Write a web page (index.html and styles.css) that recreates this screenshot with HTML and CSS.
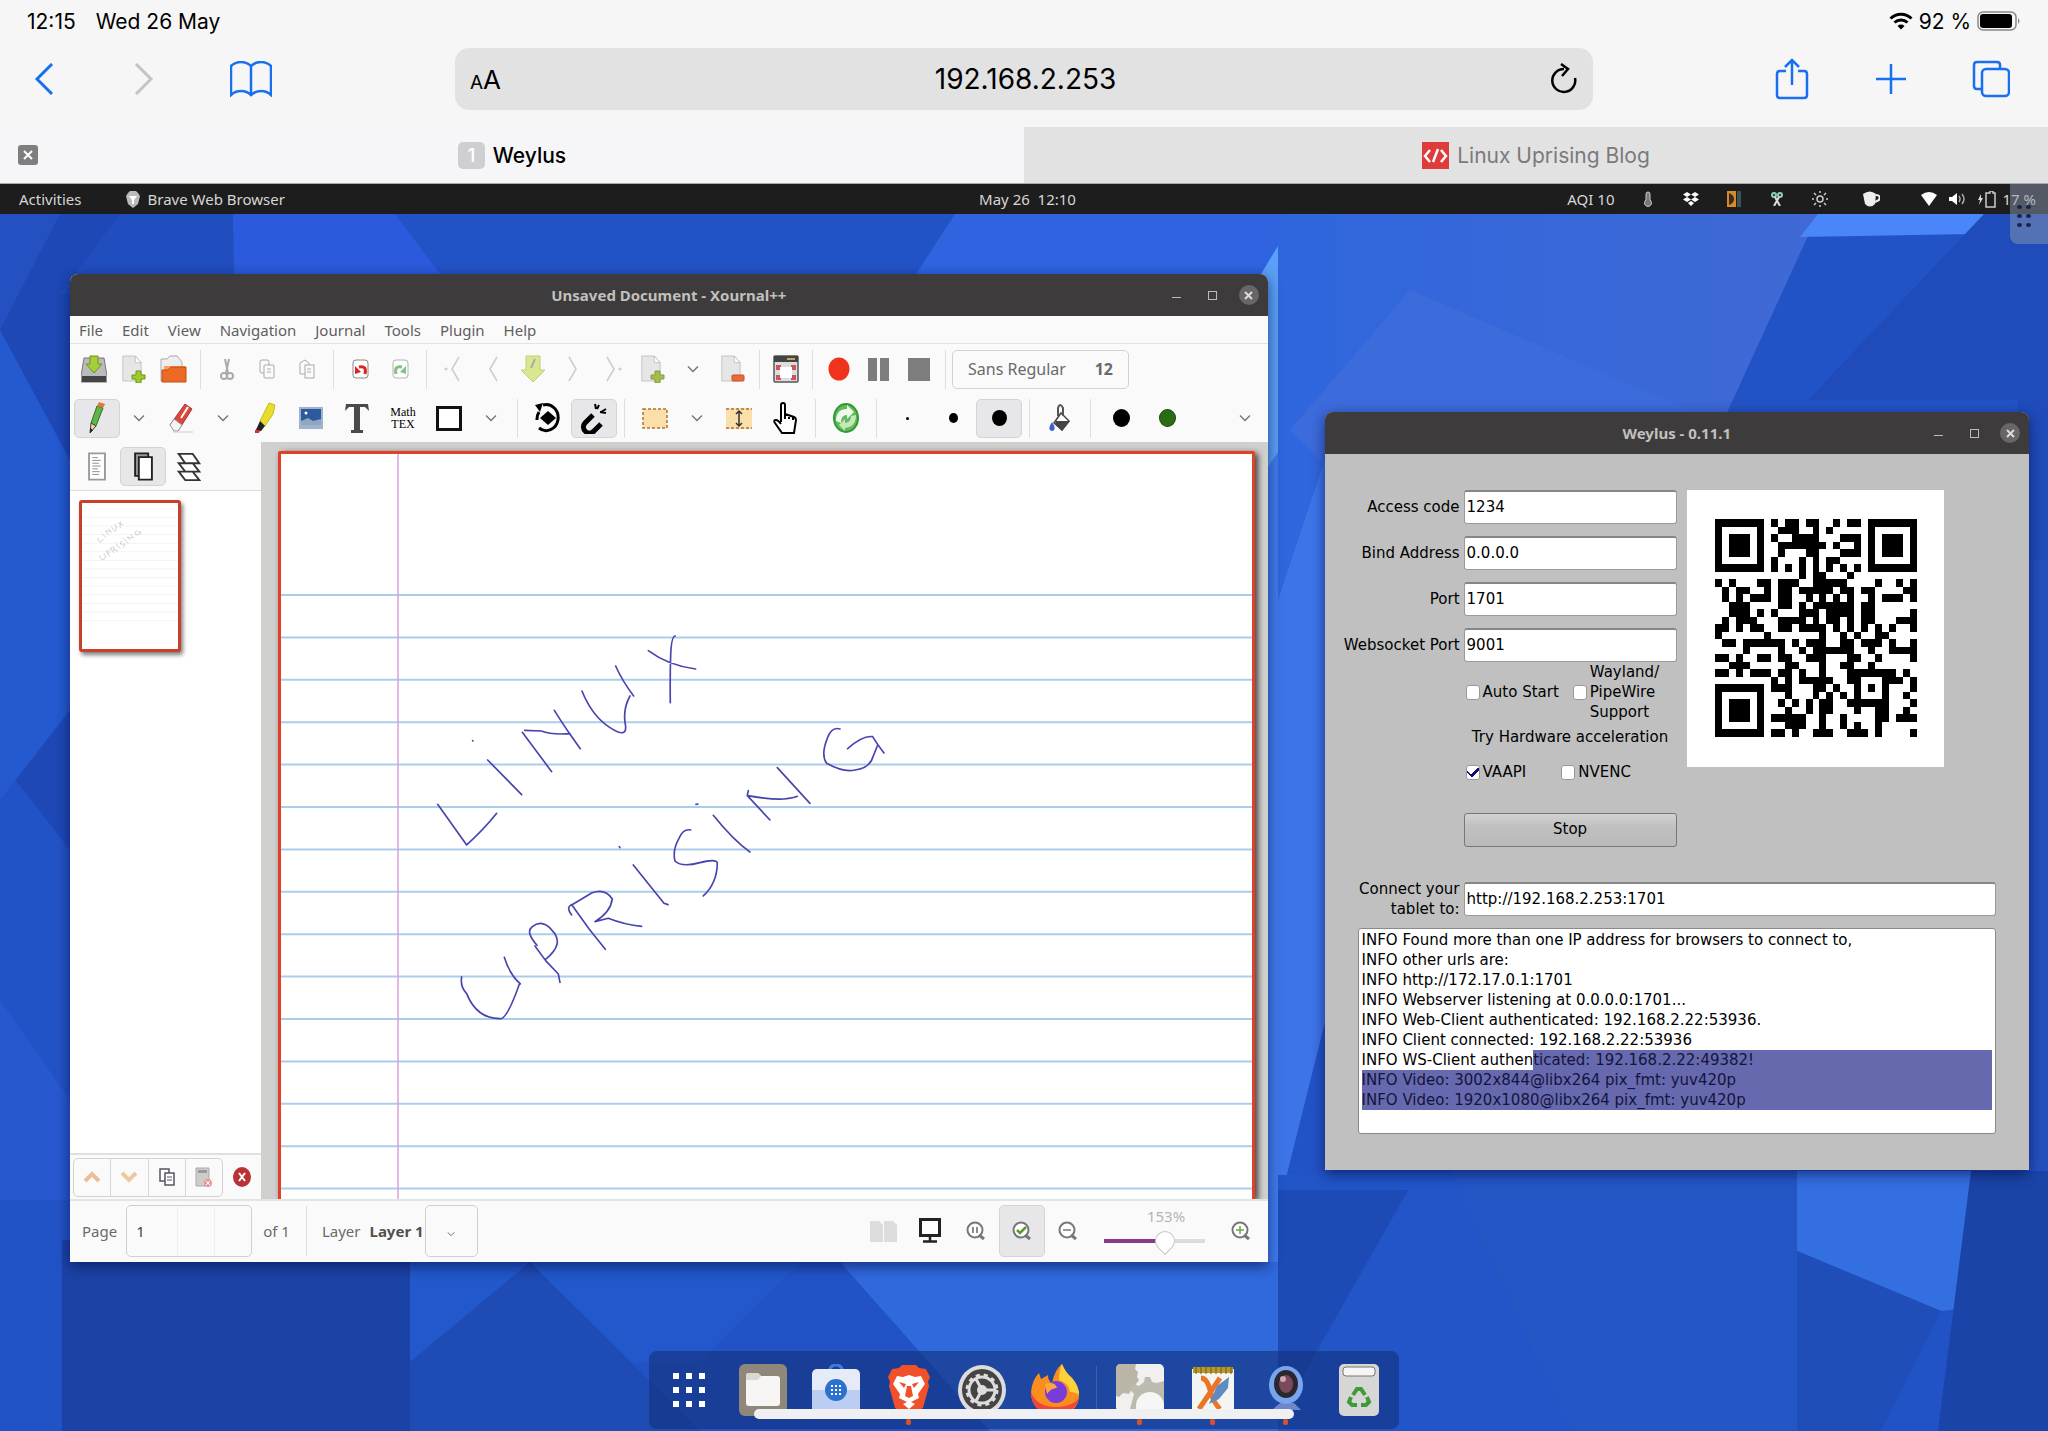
FILE: index.html
```html
<!DOCTYPE html>
<html lang="en">
<head>
    <meta charset="UTF-8">
    <meta name="viewport" content="width=device-width, initial-scale=1.0">
    <title>Weylus</title>
    <link rel="stylesheet" href="styles.css">
</head>
<body>
    <!-- Shared icons -->
    <svg class="sprite" aria-hidden="true">
        <symbol id="chevron" viewBox="0 0 12 12"><path d="M1 3.500l5 5 5-5" fill="none" stroke="#777" stroke-width="1.500"/></symbol>
        <symbol id="page" viewBox="0 0 24 32"><path d="M1 1h15l7 8v22H1z" fill="#e6e6e6" stroke="#bdbdbd"/><path d="M16 1v8h7z" fill="#fff" stroke="#bdbdbd"/></symbol>
        <symbol id="lens" viewBox="0 0 20 20"><circle cx="9" cy="9" r="7.500" fill="#fff" stroke="#777" stroke-width="2"/><path d="M13 14l5 4" stroke="#777" stroke-width="3"/></symbol>
    </svg>

    <header class="safari">
        <div class="status-bar">
            <span>12:15</span>
            <span>Wed 26 May</span>
            <span class="status-right">
                <svg width="24" height="18" viewBox="0 0 24 18" fill="none" stroke="#000" stroke-width="3"><path d="M1.500 6.500a15 15 0 0 1 21 0M5.500 10.500a9.500 9.500 0 0 1 13 0"/><path d="M12 17.500l-3.500-3.500a5 5 0 0 1 7 0z" fill="#000" stroke="none"/></svg>
                92 %
                <svg width="44" height="20" viewBox="0 0 44 20"><rect x="1" y="1" width="38" height="18" rx="5" fill="none" stroke="#888" stroke-width="1.500"/><rect x="3" y="3" width="32" height="14" rx="3"/><path d="M41 7q3 3 0 6z" fill="#888"/></svg>
            </span>
        </div>
        <nav class="toolbar">
            <button class="tool" aria-label="Back"><svg width="20" height="32" viewBox="0 0 20 32"><path d="M18 1L3 16l15 15" stroke="#1a6ff0" stroke-width="3"/></svg></button>
            <button class="tool" aria-label="Forward"><svg width="20" height="32" viewBox="0 0 20 32"><path d="M2 1l15 15L2 31" stroke="#c4c4c6" stroke-width="3"/></svg></button>
            <button class="tool tool-book" aria-label="Bookmarks"><svg width="42" height="36" viewBox="0 0 42 36"><path d="M21 5Q17 1 11 1T1 5v29q4-4 10-4t10 4q4-4 10-4t10 4V5q-4-4-10-4T21 5zv29" stroke="#1a6ff0" stroke-width="2.500"/></svg></button>
            <div class="address">
                <button class="reader" aria-label="Page settings"><small>A</small>A</button>
                <input type="text" value="192.168.2.253" aria-label="Address">
                <button class="reload" aria-label="Reload"><svg width="28" height="32" viewBox="0 0 28 32"><path d="M14 6a11.500 11.500 0 1 0 11 9M11 1l7 5-6 7" stroke="#000" stroke-width="2.500"/></svg></button>
            </div>
            <div class="actions">
                <button class="tool" aria-label="Share"><svg width="34" height="42" viewBox="0 0 34 42"><path d="M11 13H5q-3 0-3 3v21q0 3 3 3h24q3 0 3-3V16q0-3-3-3h-6M17 27V2M10 9l7-7 7 7" stroke="#1a6ff0" stroke-width="2.500"/></svg></button>
                <button class="tool" aria-label="New tab"><svg width="30" height="30" viewBox="0 0 30 30"><path d="M15 0v30M0 15h30" stroke="#1a6ff0" stroke-width="2.500"/></svg></button>
                <button class="tool" aria-label="Tabs"><svg width="38" height="38" viewBox="0 0 38 38"><rect x="10" y="9" width="27" height="27" rx="4" stroke="#1a6ff0" stroke-width="2.500"/><path d="M10 29H5q-3 0-3-3V5q0-3 3-3h20q3 0 3 3v4" stroke="#1a6ff0" stroke-width="2.500"/></svg></button>
            </div>
        </nav>
        <div class="tabs">
            <div class="tab tab-active">
                <button class="tab-close" aria-label="Close tab"><svg width="10" height="10" viewBox="0 0 10 10"><path d="M1 1l8 8M9 1L1 9" stroke="#fff" stroke-width="2"/></svg></button>
                <span class="tab-badge">1</span>
                <a href="#">Weylus</a>
            </div>
            <div class="tab">
                <svg width="27" height="27" viewBox="0 0 27 27"><path d="M0 0h27v27H0z" fill="#e03b3b"/><path d="M8 8l-5 6 5 6M19 8l5 6-5 6M16 7l-5 13" fill="none" stroke="#fff" stroke-width="2.500"/></svg>
                <a href="#">Linux Uprising Blog</a>
            </div>
        </div>
    </header>

    <div class="gnome-bar">
        <div class="gnome-left">
            <span>Activities</span>
            <span class="gnome-app">
                <svg width="14" height="17" viewBox="0 0 14 17"><path d="M2 2l2-2h6l2 2 2 3-2 8-5 4-5-4-2-8z" fill="#bbb"/><path d="M3 5h8l-3 4v4H6V9z" fill="#fff"/></svg>
                Brave Web Browser
            </span>
        </div>
        <span class="gnome-clock">May 26&nbsp; 12:10</span>
        <div class="gnome-right">
            <span class="aqi">AQI 10</span>
            <span class="tray"><svg width="10" height="16" viewBox="0 0 10 16"><path d="M3 9V3a2 2 0 0 1 4 0v6a3.500 3.500 0 1 1-4 0z" fill="#777" stroke="#ccc"/></svg></span>
            <span class="tray"><svg width="16" height="14" viewBox="0 0 16 14"><path d="M4 0l4 2.500L4 5 0 2.500zM12 0l4 2.500L12 5 8 2.500zM4 5l4 2.500L4 10 0 7.500zM12 5l4 2.500-4 2.500-4-2.500zM8 9l3 2-3 3-3-3z" fill="#fff"/></svg></span>
            <span class="tray"><svg width="14" height="16" viewBox="0 0 14 16"><path d="M0 0h9v16H0z" fill="#d88a2a"/><path d="M2 2q5 2 5 6t-5 6z" fill="#3a2a1c"/><path d="M10 0h4v16h-4z" fill="#3c5458"/></svg></span>
            <span class="tray"><svg width="14" height="14" viewBox="0 0 14 14" fill="none" stroke="#8fd0b4" stroke-width="2"><circle cx="4" cy="3" r="2"/><circle cx="10" cy="3" r="2"/><path d="M5 5l5 9M9 5L4 14" stroke="#ddd"/></svg></span>
            <span class="tray"><svg width="16" height="16" viewBox="0 0 16 16" fill="none" stroke="#ccc" stroke-width="1.500"><circle cx="8" cy="8" r="3"/><path d="M8 0v2M8 14v2M0 8h2M14 8h2M2 2l2 2M12 12l2 2M2 14l2-2M12 4l2-2"/></svg></span>
            <span class="tray tray-cup"><svg width="18" height="16" viewBox="0 0 18 16"><path d="M1 3q7-5 13 0l-1 10q-5 5-10 0z" fill="#eee"/><path d="M14 4q5 0 3 5l-4 2" fill="none" stroke="#eee" stroke-width="2"/></svg></span>
            <svg width="16" height="14" viewBox="0 0 16 14"><path d="M0 3q8-6 16 0L8 14z" fill="#fff"/></svg>
            <svg width="17" height="14" viewBox="0 0 17 14"><path d="M0 5h3l5-4v12L3 9H0z" fill="#fff"/><path d="M10 4q2 3 0 6M13 2q4 5 0 10" fill="none" stroke="#aaa" stroke-width="1.500"/></svg>
            <svg width="18" height="17" viewBox="0 0 18 17"><path d="M3 3L0 9h2l-1 5 4-7H3z" fill="#ddd"/><path d="M10 2h2V0h3v2h2v14H8V2z" fill="none" stroke="#ccc" stroke-width="1.500"/></svg>
            <span class="charge">17 %</span>
        </div>
    </div>

    <main class="desktop">
        <svg class="wallpaper" viewBox="0 214 2048 1217" preserveAspectRatio="none" aria-hidden="true">
            <defs>
                <linearGradient id="glow" x1="0" y1="0" x2="1" y2="0"><stop offset="0" stop-color="#2f66de"/><stop offset="1" stop-color="#4069d4"/></linearGradient>
            </defs>
            <path fill="#2253c6" d="M0 214h2048v1217H0z"/>
            <path fill="#1e48b6" d="M0 214h120L70 500v350L0 760z"/>
            <path fill="#2450c2" d="M0 214h60L0 330z"/>
            <path fill="#2b5bdc" d="M233 214h162l60 80-220 0z"/>
            <path fill="#214ebe" d="M120 214h113v80H60z"/>
            <path fill="#2f63e0" d="M955 214h346l-60 100H890z"/>
            <path fill="#3f7cec" d="M1278 246l-40 66v950h40z"/>
            <path fill="#5aa0f6" d="M1278 246l-40 66v200l40-60z"/>
            <path fill="url(#glow)" d="M1278 214h540l-110 240-430 300z"/>
            <path fill="#3c6bdc" d="M1290 430l120-140 280 120-60 60h-300z"/>
            <path fill="#4a85fa" d="M1818 214h166l-12 20-172 3z"/>
            <path fill="#1f4cba" d="M1984 214h64v1217h-90l60-500V400h-210z"/>
            <path fill="#3d74e8" d="M1278 600l50-150v560l-50 200z"/>
            <path fill="#2450bf" d="M2029 560h19v700l-19 60z"/>
            <path fill="#2459d0" d="M0 330l70 130v250L0 800z"/>
            <path fill="#2758d0" d="M0 1000l70 100v100H0z"/>
            <path fill="#1b42a6" d="M62 1240h350v191H62z"/>
            <path fill="#2258cb" d="M410 1262h390l-100 100H410z"/>
            <path fill="#1e4bb4" d="M410 1362l120-100 170 169H410z"/>
            <path fill="#2f69dc" d="M840 1262h438v169H990z"/>
            <path fill="#2155c8" d="M1278 1175h260l120 256h-380z"/>
            <path fill="#1e4ab6" d="M1278 1190h130l-130 230z"/>
            <path fill="#2556c6" d="M1450 1171h350v260h-230z"/>
            <path fill="#346fe2" d="M1797 1171h174l60 130-90 10-144-60z"/>
            <path fill="#1f4eb8" d="M1797 1251l144 60-60 120h-84z"/>
            <path fill="#1b44a8" d="M1971 1171h77v260h-110z"/>
        </svg>

        <section class="window xournal">
            <div class="titlebar">
                <h1>Unsaved Document - Xournal++</h1>
                <div class="window-buttons">
                    <button aria-label="Minimize"><i class="min"></i></button>
                    <button aria-label="Maximize"><i class="max"></i></button>
                    <button class="close" aria-label="Close"><svg width="9" height="9" viewBox="0 0 9 9"><path d="M1 1l7 7M8 1L1 8" stroke="#ddd" stroke-width="2"/></svg></button>
                </div>
            </div>
            <nav class="menubar">
                <a href="#">File</a>
                <a href="#">Edit</a>
                <a href="#">View</a>
                <a href="#">Navigation</a>
                <a href="#">Journal</a>
                <a href="#">Tools</a>
                <a href="#">Plugin</a>
                <a href="#">Help</a>
            </nav>

            <div class="row row-file">
                <button aria-label="Save"><svg width="26" height="28" viewBox="0 0 26 28"><path d="M3 3h20l3 18v6H0v-6z" fill="#bbb" stroke="#777"/><path d="M1 21h24v6H1z" fill="#444"/><path d="M9 1h8v8h4l-8 9-8-9h4z" fill="#a5cf3a" stroke="#6e9414"/></svg></button>
                <button aria-label="New"><svg width="26" height="28" viewBox="0 0 26 28"><use href="#page" x="1" width="20" height="27"/><path d="M15 16h5v4h4v4h-4v4h-5v-4h-4v-4h4z" fill="#9ccc2e" stroke="#6e9414"/></svg></button>
                <button aria-label="Open"><svg width="28" height="28" viewBox="0 0 28 28"><path d="M1 4h6l3-3h7l5 6v19H1z" fill="#eee" stroke="#aaa"/><path d="M4 11h21v6H4z" fill="#f7a05a"/><path d="M2 15h6l3-3h15v15H2z" fill="#ea6a26" stroke="#c24d12"/></svg></button>
                <i class="sep"></i>
                <button aria-label="Cut"><svg width="14" height="22" viewBox="0 0 14 22" fill="none" stroke="#aaa" stroke-width="2"><path d="M5 1l3 14M9 1L6 15"/><circle cx="4" cy="18" r="3"/><circle cx="10" cy="18" r="3"/></svg></button>
                <button aria-label="Copy"><svg width="16" height="20" viewBox="0 0 16 20" fill="#fafafa" stroke="#aaa"><rect x="1" y="1" width="9" height="13" rx="2"/><rect x="5" y="6" width="10" height="13" rx="1"/><path d="M8 10h4M8 13h4"/></svg></button>
                <button aria-label="Paste"><svg width="16" height="20" viewBox="0 0 16 20" fill="#fafafa" stroke="#aaa"><path d="M1 4l5-3 4 3v11H1z"/><rect x="6" y="6" width="9" height="13"/><path d="M8 10h4M8 13h4"/></svg></button>
                <i class="sep"></i>
                <button aria-label="Undo"><svg width="17" height="20" viewBox="0 0 17 20"><rect x="1" y="1" width="15" height="18" rx="3" fill="#fff" stroke="#888"/><path d="M13 15q2-9-6-7" fill="none" stroke="#d22" stroke-width="3"/><path d="M3 15V7l6 6z" fill="#d22"/></svg></button>
                <button class="faded" aria-label="Redo"><svg width="17" height="20" viewBox="0 0 17 20"><rect x="1" y="1" width="15" height="18" rx="3" fill="#fff" stroke="#888"/><path d="M4 15q-2-9 6-7" fill="none" stroke="#3a9a3a" stroke-width="3"/><path d="M14 15V7l-6 6z" fill="#3a9a3a"/></svg></button>
                <i class="sep"></i>
                <button aria-label="First page"><svg width="18" height="26" viewBox="0 0 18 26"><path d="M15 1L8 13l7 12" fill="none" stroke="#ccc" stroke-width="1.500"/><circle cx="2" cy="13" r="1.500" fill="#ccc"/></svg></button>
                <button aria-label="Previous page"><svg width="10" height="26" viewBox="0 0 10 26"><path d="M9 1L2 13l7 12" fill="none" stroke="#ccc" stroke-width="1.500"/></svg></button>
                <button class="faded" aria-label="Go to page"><svg width="26" height="28" viewBox="0 0 26 28"><path d="M6 1h14v14h5L13 27 1 15h5z" fill="#c6dc4a" stroke="#9ab02a"/><path d="M15 4l-4 9" stroke="#777" stroke-width="2"/></svg></button>
                <button aria-label="Next page"><svg width="10" height="26" viewBox="0 0 10 26"><path d="M1 1l7 12-7 12" fill="none" stroke="#ccc" stroke-width="1.500"/></svg></button>
                <button aria-label="Last page"><svg width="18" height="26" viewBox="0 0 18 26"><path d="M3 1l7 12-7 12" fill="none" stroke="#ccc" stroke-width="1.500"/><circle cx="16" cy="13" r="1.500" fill="#ccc"/></svg></button>
                <button aria-label="Insert page"><svg width="26" height="28" viewBox="0 0 26 28"><use href="#page" x="1" width="20" height="27"/><path d="M15 16h5v4h4v4h-4v4h-5v-4h-4v-4h4z" fill="#a4bd4e" stroke="#869b3c"/></svg></button>
                <button aria-label="Page options"><svg width="12" height="12"><use href="#chevron"/></svg></button>
                <button aria-label="Delete page"><svg width="26" height="28" viewBox="0 0 26 28"><use href="#page" x="1" width="20" height="27"/><rect x="12" y="20" width="12" height="6" rx="1" fill="#ea6a3a" stroke="#c2522a"/></svg></button>
                <i class="sep"></i>
                <button aria-label="Fullscreen"><svg width="26" height="28" viewBox="0 0 26 28"><rect x="1" y="1" width="24" height="26" rx="1" fill="#ddd" stroke="#555" stroke-width="1.500"/><path d="M1 1h24v6H1z" fill="#444"/><path d="M14 3h8v2h-8z" fill="#c9a45a"/><path d="M3 10h5v5H3zM18 10h5v5h-5zM3 20h5v5H3zM18 20h5v5h-5z" fill="#c8565a"/><path d="M7 12h12v11H7z" fill="#fff"/></svg></button>
                <i class="sep"></i>
                <button aria-label="Record"><svg width="22" height="24" viewBox="0 0 22 24"><ellipse cx="11" cy="12" rx="10.500" ry="11.500" fill="#f0331c"/></svg></button>
                <button aria-label="Pause"><svg width="22" height="23" viewBox="0 0 22 23"><path d="M0 0h9v23H0zM12 0h9v23h-9z" fill="#7d7d7d"/></svg></button>
                <button aria-label="Stop recording"><svg width="22" height="23" viewBox="0 0 22 23"><path d="M0 0h22v23H0z" fill="#7d7d7d"/></svg></button>
                <i class="sep"></i>
                <button class="font-button"><span>Sans Regular</span><b>12</b></button>
            </div>

            <div class="row row-tools">
                <button class="on" aria-label="Pen"><svg width="18" height="32" viewBox="0 0 18 32"><path d="M3 21L9 4l6 2-7 18z" fill="#5fb548" stroke="#356e28"/><path d="M9 4l2-4 6 2-2 4z" fill="#e07a3a"/><path d="M3 21l-1 10 6-7z" fill="#e8d6a0" stroke="#444"/><path d="M2 26v5l3-3z" fill="#222"/></svg></button>
                <button class="drop" aria-label="Pen options"><svg width="12" height="12"><use href="#chevron"/></svg></button>
                <button aria-label="Eraser"><svg width="24" height="30" viewBox="0 0 24 30"><path d="M1 22L16 1l7 5L9 28z" fill="#d9483b" stroke="#a33"/><path d="M12 15L19 4" stroke="#fff" stroke-width="2"/><path d="M1 22l4-6 8 6-4 6H5z" fill="#f4f4f4" stroke="#999"/><path d="M4 29h20" stroke="#ccc"/></svg></button>
                <button class="drop" aria-label="Eraser options"><svg width="12" height="12"><use href="#chevron"/></svg></button>
                <button aria-label="Highlighter"><svg width="22" height="32" viewBox="0 0 22 32"><path d="M6 19L15 1l6 2-2 9-8 12z" fill="#e8dc2c" stroke="#c9bc1c"/><path d="M6 19l5 5-4 5-6 1z" fill="#222"/><path d="M1 28h5l-1 3H1z" fill="#c33"/></svg></button>
                <button aria-label="Image"><svg width="24" height="22" viewBox="0 0 24 22"><path d="M0 0h24v22H0z" fill="#9fb4cc"/><path d="M2 2h20v14H2z" fill="#2c5a9c"/><path d="M2 14l7-3 5 3 8-2v6H2z" fill="#8fa8c0"/><circle cx="7" cy="6" r="1.500" fill="#fff"/></svg></button>
                <button aria-label="Text"><svg width="24" height="30" viewBox="0 0 24 30"><path d="M0 8L1 1h22l1 7-4-4H4z" fill="#4a4a4a"/><path d="M9 2h6v26H9z" fill="#4a4a4a"/><path d="M6 27h12v3H6z" fill="#4a4a4a"/></svg></button>
                <button class="math">Math<br>TEX</button>
                <button aria-label="Shape"><svg width="26" height="25" viewBox="0 0 26 25"><path d="M1.500 1.500h23v22h-23z" fill="#fff" stroke="#111" stroke-width="3"/></svg></button>
                <button class="drop" aria-label="Shape options"><svg width="12" height="12"><use href="#chevron"/></svg></button>
                <i class="sep"></i>
                <button aria-label="Rotation snapping"><svg width="26" height="32" viewBox="0 0 26 32"><path d="M13 9l8 7-8 7-8-7z"/><path d="M8 3a12 13 0 1 1-4 23M2 18a12 13 0 0 1 2-8" fill="none" stroke="#000" stroke-width="3"/><path d="M0 3l8-2-3 9z"/></svg></button>
                <button class="on" aria-label="Grid snapping"><svg width="28" height="32" viewBox="0 0 28 32" fill="none" stroke="#000" stroke-width="5"><path d="M13 13l-8 8a6 6 0 0 0 9 8l7-7"/><path d="M15 2l1 5M20 10l6 1M19 3l-2 4M26 7l-5 3" stroke-width="2"/></svg></button>
                <i class="sep"></i>
                <button aria-label="Select"><svg width="26" height="21" viewBox="0 0 26 21"><path d="M1 1h24v19H1z" fill="#fae0a8" stroke="#b0703a" stroke-width="1.500" stroke-dasharray="3 2"/></svg></button>
                <button class="drop" aria-label="Select options"><svg width="12" height="12"><use href="#chevron"/></svg></button>
                <button aria-label="Vertical space"><svg width="26" height="21" viewBox="0 0 26 21"><path d="M0 0h26v21H0z" fill="#fae0a8"/><path d="M0 1h26M0 20h26" stroke="#b0703a" stroke-width="1.500" stroke-dasharray="3 2"/><path d="M13 3v15M10 6l3-3 3 3M10 15l3 3 3-3" fill="none" stroke="#333" stroke-width="1.500"/></svg></button>
                <button aria-label="Hand"><svg width="24" height="32" viewBox="0 0 24 32"><path d="M8 20V3q0-2 2-2t2 2v9l9 3q2 1 2 3l-2 13H9L2 21q-2-3 1-3 2 0 5 4M12 12v5M16 13v4M20 15v3" fill="#fff" stroke="#000" stroke-width="2"/></svg></button>
                <i class="sep"></i>
                <button aria-label="Redraw"><svg width="26" height="32" viewBox="0 0 26 32"><ellipse cx="13" cy="16" rx="13" ry="15" fill="#2f9a34"/><ellipse cx="13" cy="16" rx="11" ry="13" fill="#62b85a"/><path d="M3 19Q3 7 14 7V3l7 7-7 7v-4q-6 0-6 8z" fill="#eef9ea"/><path d="M23 13q0 12-11 13v3l-6-6 6-6v4q6-1 6-7z" fill="#c4e8b8"/></svg></button>
                <i class="sep"></i>
                <button aria-label="Fine"><i class="dot dot-fine"></i></button>
                <button aria-label="Medium"><i class="dot dot-medium"></i></button>
                <button class="on" aria-label="Thick"><i class="dot dot-thick"></i></button>
                <i class="sep"></i>
                <button aria-label="Fill"><svg width="24" height="28" viewBox="0 0 24 28"><path d="M13 9l8 8-7 9-8-7z" fill="#fff" stroke="#444" stroke-width="1.500"/><path d="M8 17h14l-8 10-7-7z" fill="#444"/><path d="M10 12V4q2-6 5 0v8" fill="none" stroke="#555" stroke-width="2"/><path d="M4 18q-4 6-2 8t4 0-2-8z" fill="#3a62c8"/></svg></button>
                <i class="sep"></i>
                <button aria-label="Black"><i class="dot dot-color"></i></button>
                <button aria-label="Green"><i class="dot dot-color dot-green"></i></button>
                <button class="drop last" aria-label="More"><svg width="12" height="12"><use href="#chevron"/></svg></button>
            </div>

            <div class="workspace">
                <aside class="sidebar">
                    <div class="row side-tabs">
                        <button aria-label="Contents"><svg width="20" height="29" viewBox="0 0 20 31"><path d="M1.500 1.500h17v28h-17z" fill="#fff" stroke="#999" stroke-width="2"/><path d="M5 6h6M5 9h9M5 12h7M5 15h9M5 18h6M5 21h8M5 24h7" stroke="#888"/></svg></button>
                        <button class="on" aria-label="Page previews"><svg width="21" height="29" viewBox="0 0 21 31"><path d="M1.500 1.500h14v24h-14z" fill="#999" stroke="#222" stroke-width="2"/><path d="M5.500 5.500h14v24h-14z" fill="#fff" stroke="#222" stroke-width="2"/></svg></button>
                        <button aria-label="Layers"><svg width="26" height="29" viewBox="0 0 26 31" fill="#fff" stroke="#333" stroke-width="2"><path d="M2 21h15l7 9H9zM2 12h15l7 9H9zM2 2h15l7 10H9z"/></svg></button>
                    </div>
                    <div class="previews">
                        <svg class="thumb" viewBox="281 454 972 1440" preserveAspectRatio="none">
                            <path d="M281 595h972m-972 85h972m-972 85h972m-972 85h972m-972 85h972m-972 85h972m-972 85h972m-972 85h972m-972 85h972m-972 85h972m-972 85h972m-972 85h972m-972 85h972" stroke="#f0f5fc" stroke-width="10"/>
                            <g transform="translate(400 600) scale(.33)"><use href="#ink" stroke="#bbb" stroke-width="20"/></g>
                        </svg>
                    </div>
                    <div class="side-actions">
                        <div class="button-group">
                            <button aria-label="Move page up"><svg width="18" height="12" viewBox="0 0 18 12"><path d="M2 10l7-7 7 7" fill="none" stroke="#efbc9a" stroke-width="4"/></svg></button>
                            <button aria-label="Move page down"><svg width="18" height="12" viewBox="0 0 18 12"><path d="M2 2l7 7 7-7" fill="none" stroke="#efc8a2" stroke-width="4"/></svg></button>
                            <button aria-label="Duplicate page"><svg width="16" height="18" viewBox="0 0 16 18" fill="#fff" stroke="#556" stroke-width="1.500"><path d="M1 1h9v12H1z"/><path d="M6 5h9v12H6z"/><path d="M8 9h5M8 12h5" stroke-width="1"/></svg></button>
                            <button aria-label="Remove page"><svg width="18" height="20" viewBox="0 0 18 20"><path d="M1 1h13v18H1z" fill="#ccc" stroke="#aaa"/><path d="M3 3h9v3H3z" fill="#999"/><circle cx="13" cy="16" r="4" fill="#e79a9a"/><path d="M11 14l4 4M15 14l-4 4" stroke="#fff"/></svg></button>
                        </div>
                        <button class="side-close" aria-label="Close sidebar"><svg width="18" height="20" viewBox="0 0 18 20"><ellipse cx="9" cy="10" rx="9" ry="10" fill="#b93236"/><path d="M6 6l6 8M12 6l-6 8" stroke="#fff" stroke-width="2"/></svg></button>
                    </div>
                </aside>
                <div class="canvas">
                    <svg class="paper" viewBox="281 454 972 745" preserveAspectRatio="xMinYMin slice">
                        <g id="rules" stroke="#acccec" stroke-width="2"></g>
                        <path d="M398 454v760" stroke="#dca0da" stroke-width="1.500"/>
                        <g transform="translate(400 600) scale(.3333)" stroke="#4744ae" stroke-width="5">
                            <path id="ink" fill="none" stroke-linecap="round" stroke-linejoin="round" d="M113 613l87 122Q250 690 290 640M218 422l1 1M263 480l102 104M455 515L367 397M374 391l50 2q30 12 86 8M463 331q25 40 46 70l32 45M546 273q30 75 84 110t46-10 14-85M647 198q20 45 54 90M745 152q60 45 142 55M826 108q-12 0-14 60t-1 140M185 1131q-5 30 15 50 30 75 100 75 20 5 58-103M313 1072q15 50 48 80M411 1036q-35-40-15-55 30-25 60 10 40 40-20 88M405 1038l32 44 38 40 5 25M515 945q-20-25 5-33l55-33q40-15 62 18-5 40-52 68l40-10q50 20 100 24M518 918l50 70 48 60M658 740l2 3M700 795l92 115 12 4M872 690q-22-5-35 25-20 35-12 68 20 20 75 5 48-12 52 0 0 60-42 100M888 613l6-1M940 646q60 75 110 110M1045 572l-3 15 68 73M1042 587q70 12 110 10 30-3 40-8M1132 503l98 107M1320 387q-25-8-38 28-20 50-2 75 50 28 85 20 45-5 55-42l12-30M1343 446q45-40 75-36 15 25 34 49"/>
                        </g>
                    </svg>
                </div>
            </div>

            <footer class="statusline">
                <label for="page-no">Page</label>
                <div class="spin"><input id="page-no" type="text" value="1"><i></i><i></i></div>
                <span>of 1</span>
                <i class="foot-sep"></i>
                <label for="layer">Layer</label>
                <b>Layer 1</b>
                <button id="layer" class="layer-button" aria-label="Choose layer"><svg width="8" height="8"><use href="#chevron"/></svg></button>
                <div class="zoom row">
                    <button aria-label="Two pages"><svg width="27" height="22" viewBox="0 0 27 22"><path d="M0 1h9l4 4v17H0zM14 1h9l4 4v17H14z" fill="#dcdcdc"/></svg></button>
                    <button aria-label="Presentation"><svg width="22" height="25" viewBox="0 0 22 25"><path d="M1.500 1.500h19v16h-19z" fill="#fff" stroke="#222" stroke-width="3"/><path d="M11 18v5M4 23.500h14" stroke="#222" stroke-width="2.500"/></svg></button>
                    <button aria-label="Zoom 100%"><svg width="20" height="20" viewBox="0 0 20 20"><use href="#lens"/><path d="M7 6v6M11 6v6" stroke="#666" stroke-width="1.500"/></svg></button>
                    <button class="on" aria-label="Zoom fit"><svg width="20" height="20" viewBox="0 0 20 20"><use href="#lens"/><path d="M5 9l3 3 6-6" fill="none" stroke="#5a9a2a" stroke-width="2.500"/></svg></button>
                    <button aria-label="Zoom out"><svg width="20" height="20" viewBox="0 0 20 20"><use href="#lens"/><path d="M5 9h8" stroke="#777" stroke-width="1.500"/></svg></button>
                    <div class="zoom-slider">
                        <label for="zoom">153%</label>
                        <input id="zoom" type="range" min="0" max="100" value="63">
                    </div>
                    <button aria-label="Zoom in"><svg width="20" height="20" viewBox="0 0 20 20"><use href="#lens"/><path d="M5 9h8M9 5v8" stroke="#6aa84a" stroke-width="1.500"/></svg></button>
                </div>
            </footer>
        </section>

        <section class="window weylus">
            <div class="titlebar">
                <h2>Weylus - 0.11.1</h2>
                <div class="window-buttons">
                    <button aria-label="Minimize"><i class="min"></i></button>
                    <button aria-label="Maximize"><i class="max"></i></button>
                    <button class="close" aria-label="Close"><svg width="9" height="9" viewBox="0 0 9 9"><path d="M1 1l7 7M8 1L1 8" stroke="#ddd" stroke-width="2"/></svg></button>
                </div>
            </div>
            <form class="settings" onsubmit="return false">
                <div class="settings-top">
                    <div class="fields">
                        <label for="code">Access code</label>
                        <input id="code" type="text" value="1234">
                        <label for="bind">Bind Address</label>
                        <input id="bind" type="text" value="0.0.0.0">
                        <label for="port">Port</label>
                        <input id="port" type="text" value="1701">
                        <label for="ws-port">Websocket Port</label>
                        <input id="ws-port" type="text" value="9001">
                        <div class="options">
                            <div class="checks">
                                <label><input type="checkbox">Auto Start</label>
                                <label><input type="checkbox"><span>Wayland/<br>PipeWire<br>Support</span></label>
                            </div>
                            <p>Try Hardware acceleration</p>
                            <div class="checks checks-hw">
                                <label><input type="checkbox" checked>VAAPI</label>
                                <label><input type="checkbox">NVENC</label>
                            </div>
                            <button class="stop">Stop</button>
                        </div>
                    </div>
                    <div class="qr"><svg id="qr" width="202" height="218" viewBox="0 0 29 29" preserveAspectRatio="none" shape-rendering="crispEdges"></svg></div>
                </div>
                <div class="connect">
                    <label for="url">Connect your<br>tablet to:</label>
                    <input id="url" type="text" value="http://192.168.2.253:1701">
                </div>
                <div class="log">
                    <div>INFO Found more than one IP address for browsers to connect to,</div>
                    <div>INFO other urls are:</div>
                    <div>INFO http://172.17.0.1:1701</div>
                    <div>INFO Webserver listening at 0.0.0.0:1701...</div>
                    <div>INFO Web-Client authenticated: 192.168.2.22:53936.</div>
                    <div>INFO Client connected: 192.168.2.22:53936</div>
                    <div class="partly">INFO WS-Client authen<span class="selected">ticated: 192.168.2.22:49382!</span></div>
                    <div class="selected">INFO Video: 3002x844@libx264 pix_fmt: yuv420p</div>
                    <div class="selected">INFO Video: 1920x1080@libx264 pix_fmt: yuv420p</div>
                </div>
            </form>
        </section>

        <nav class="dock">
            <a href="#" aria-label="Show applications"><svg width="34" height="36" viewBox="0 0 34 36" fill="#fff"><path d="M0 1h6v6H0zM13 1h6v6h-6zM26 1h6v6h-6zM0 15h6v6H0zM13 15h6v6h-6zM26 15h6v6h-6zM0 29h6v6H0zM13 29h6v6h-6zM26 29h6v6h-6z"/></svg></a>
            <a href="#" aria-label="Files"><svg width="48" height="52" viewBox="0 0 48 52"><rect width="48" height="52" rx="6" fill="#8f887a"/><path d="M7 12q0-3 3-3h9l3 3h16q3 0 3 3v24q0 3-3 3H10q-3 0-3-3z" fill="#f7f6f4"/><path d="M7 12q0-3 3-3h9l3 3-3 4H7z" fill="#dcd8cf"/></svg></a>
            <a href="#" aria-label="Software"><svg width="48" height="52" viewBox="0 0 48 52"><path d="M17 10q0-9 7-9t7 9" fill="none" stroke="#3a7be0" stroke-width="3"/><rect y="5" width="48" height="43" rx="5" fill="#e6ebf8"/><path d="M0 26h48v17q0 5-5 5H5q-5 0-5-5z" fill="#bccdf2"/><circle cx="24" cy="26" r="11" fill="#2a72cc"/><path d="M19 22h2M23 22h2M27 22h2M19 26h2M23 26h2M27 26h2M19 30h2M23 30h2M27 30h2" stroke="#fff" stroke-width="2"/></svg></a>
            <a class="running" href="#" aria-label="Brave"><svg width="44" height="52" viewBox="0 0 44 52"><path d="M12 4l3-3h14l3 3 7 1 4 8-2 5 1 4-6 22-14 8L8 44 2 22l1-4-2-5 4-8z" fill="#f0502a"/><path d="M10 12l6 1 6-2 6 2 6-1 4 8-7 10 1 4-10 5-10-5 1-4-7-10z" fill="#fff"/><path d="M12 18l7 2-2 4zM32 18l-7 2 2 4zM20 22h4l2 10-4 2-4-2z" fill="#f0502a"/><path d="M16 40l6-3 6 3-6 5z" fill="#fff"/></svg></a>
            <a href="#" aria-label="Settings"><svg width="48" height="52" viewBox="0 0 48 52"><ellipse cx="24" cy="26" rx="24" ry="25" fill="#dcdcdc"/><ellipse cx="24" cy="26" rx="20" ry="21" fill="#444"/><circle cx="24" cy="26" r="13" fill="none" stroke="#ddd" stroke-width="3"/><circle cx="24" cy="26" r="15" fill="none" stroke="#ddd" stroke-width="3" stroke-dasharray="4 4"/><circle cx="24" cy="26" r="5" fill="#ddd"/><path d="M24 26h12M24 26l-6-11M24 26l-6 11" stroke="#ddd" stroke-width="3"/></svg></a>
            <a href="#" aria-label="Firefox"><svg width="48" height="52" viewBox="0 0 48 52"><path d="M31 0q3 8 10 14 7 8 7 17 0 19-24 19Q0 49 0 28 1 16 8 9l2 6 7-4q0 6 4 8 3-14 10-19z" fill="#f98e1f"/><path d="M31 0q3 8 10 14 7 8 7 17-3-3-9-3-1-9-11-12 0-9 3-16z" fill="#fcd23c"/><path d="M0 28q0 21 24 22 20 0 24-16-6 8-20 9Q6 44 0 28z" fill="#f0453c"/><circle cx="25" cy="28" r="11" fill="#7a3cd8"/><path d="M14 20q10-3 12 4-6 0-10 6z" fill="#fca83a"/></svg></a>
            <i class="dock-sep"></i>
            <a class="running" href="#" aria-label="Weylus"><svg width="48" height="52" viewBox="0 0 48 52"><rect width="48" height="48" rx="5" fill="#f0f0ee"/><path d="M0 5q0-5 5-5h15l-1 5 3 3-1 5 2 3-3 4v4l-5 2-2 4-6-1-4 4-3-1z" fill="#b9b6a8"/><path d="M18 30l-4-4 4-6 5 2 5-4 1-5h5l2 5 5 1 7-2v28H14z" fill="#bdbbb0"/><circle cx="34" cy="42" r="14" fill="#f6f6f4"/></svg></a>
            <a class="running" href="#" aria-label="Xournal++"><svg width="44" height="52" viewBox="0 0 44 52"><path d="M1 5h42v43H1z" fill="#f4f4f2"/><path d="M2 3h40v6H2z" fill="#b89a2a"/><path d="M5 2v8M10 2v8M15 2v8M20 2v8M25 2v8M30 2v8M35 2v8M40 2v8" stroke="#6b5a18"/><path d="M10 14q6 0 9 12t10 19M29 14L8 45" fill="none" stroke="#ec7426" stroke-width="5"/><path d="M18 40l8-18 12-9-1 11-9 11z" fill="#5f8cc0"/></svg></a>
            <a class="running" href="#" aria-label="Webcam"><svg width="36" height="52" viewBox="0 0 36 52"><path d="M4 46l8-7h14l7 7z" fill="#6f86c8"/><ellipse cx="18" cy="21" rx="17" ry="19" fill="#77a6ee"/><ellipse cx="18" cy="20" rx="12" ry="14" fill="#2c2630"/><ellipse cx="18" cy="20" rx="7" ry="9" fill="#7a4a5c"/><circle cx="15" cy="15" r="3" fill="#c9a8b4"/></svg></a>
            <a href="#" aria-label="Trash"><svg width="40" height="52" viewBox="0 0 40 52"><rect width="40" height="52" rx="5" fill="#d6d6d4"/><rect x="4" y="3" width="32" height="9" rx="3" fill="#f6f6f6" stroke="#777"/><path d="M14 31l4-6h4l4 6M28 33l2 5-3 3h-5M12 33l-2 5 3 3h5" fill="none" stroke="#3f9a3a" stroke-width="4"/></svg></a>
        </nav>
        <div class="home-indicator"></div>
        <div class="drag-handle"><i></i><i></i><i></i><i></i><i></i><i></i></div>
    </main>
    <script src="script.js"></script>
</body>
</html>
```

FILE: styles.css
```css
* {
    margin: 0;
    padding: 0;
    box-sizing: border-box;
}

body {
    min-height: 100vh;
    display: flex;
    flex-direction: column;
    font-family: 'Noto Sans', 'Open Sans', sans-serif;
    font-size: 15px;
    background: #f6f6f6;
    color: #000;
}

button, input {
    font: inherit;
    color: inherit;
    border: none;
    background: none;
}

a {
    color: inherit;
    text-decoration: none;
}

svg {
    display: block;
    flex: none;
}

.sprite {
    position: absolute;
    width: 0;
    height: 0;
}

/* Safari chrome */
.safari {
    font-family: Inter, sans-serif;
}

.safari button svg {
    fill: none;
}

.status-bar {
    display: flex;
    align-items: center;
    gap: 20px;
    height: 42px;
    padding: 0 27px;
    font-size: 21px;
}

.status-right {
    display: flex;
    align-items: center;
    gap: 6px;
    margin-left: auto;
}

.toolbar {
    display: flex;
    align-items: center;
    height: 85px;
    padding: 0 38px 11px 34px;
}

.tool {
    width: 100px;
    height: 62px;
}

.tool-book {
    width: 42px;
    margin-left: -4px;
}

.address {
    display: flex;
    align-items: center;
    flex: 1;
    height: 62px;
    margin-left: 183px;
    padding: 0 15px;
    border-radius: 14px;
    background: #e2e2e3;
}

.address input {
    flex: 1;
    min-width: 0;
    font-size: 28px;
    text-align: center;
}

.reader {
    font-size: 26px;
}

.reader small {
    font-size: 19px;
}

.actions {
    display: flex;
    justify-content: space-between;
    align-items: center;
    width: 235px;
    margin-left: 182px;
}

.actions .tool {
    width: auto;
}

.tabs {
    display: grid;
    grid-template-columns: 1fr 1fr;
    height: 57px;
    border-bottom: 1px solid #aaa;
    font-size: 21px;
}

.tab {
    position: relative;
    display: flex;
    align-items: center;
    justify-content: center;
    gap: 8px;
    background: #e2e2e3;
    color: #7a7a7c;
}

.tab-active {
    background: #f6f6f8;
    color: #000;
    font-weight: 500;
}

.tab-close {
    position: absolute;
    left: 18px;
    display: flex;
    align-items: center;
    justify-content: center;
    width: 20px;
    height: 20px;
    border-radius: 3px;
    background: #7f7f80;
}

.tab-badge {
    width: 27px;
    height: 27px;
    border-radius: 5px;
    background: #cfcfd2;
    color: #fff;
    font-size: 19px;
    line-height: 27px;
    text-align: center;
}

/* GNOME top bar */
.gnome-bar {
    display: grid;
    grid-template-columns: 1fr auto 1fr;
    align-items: center;
    height: 30px;
    padding: 0 12px 0 19px;
    background: #1d1d1d;
    color: #d6d6d6;
}

.gnome-left,
.gnome-right,
.gnome-app {
    display: flex;
    align-items: center;
}

.gnome-left {
    gap: 44px;
}

.gnome-app {
    gap: 8px;
}

.gnome-right {
    justify-content: flex-end;
    gap: 12px;
}

.gnome-right .tray {
    display: flex;
    justify-content: center;
    width: 31px;
}

.gnome-right .tray-cup {
    width: 47px;
    margin-right: 15px;
}

.aqi {
    margin-right: 6px;
}

.charge {
    margin-left: -6px;
}

/* Desktop */
.desktop {
    position: relative;
    flex: 1;
    display: grid;
    grid-template-columns: minmax(0, 17fr) minmax(0, 10fr);
    gap: 57px;
    padding: 60px 19px 169px 70px;
}

.wallpaper {
    position: absolute;
    inset: 0;
    width: 100%;
    height: 100%;
}

.window {
    position: relative;
    border-radius: 8px 8px 0 0;
    box-shadow: 0 4px 14px rgba(0, 10, 60, 0.6);
}

.titlebar {
    display: flex;
    align-items: center;
    justify-content: center;
    height: 42px;
    border-radius: 8px 8px 0 0;
    background: #3d3b3b;
    color: #c2c0be;
}

.titlebar h1,
.titlebar h2 {
    font-size: 15px;
    font-weight: 700;
}

.window-buttons {
    position: absolute;
    right: 9px;
    display: flex;
    gap: 16px;
}

.window-buttons button {
    display: flex;
    align-items: center;
    justify-content: center;
    width: 20px;
    height: 20px;
    border-radius: 50%;
}

.window-buttons .close {
    background: #686666;
}

.min {
    width: 9px;
    height: 1px;
    margin-top: 5px;
    background: #bbb;
}

.max {
    width: 9px;
    height: 9px;
    border: 1px solid #bbb;
}

/* Xournal++ */
.xournal {
    display: flex;
    flex-direction: column;
    background: #fbfafb;
    color: #6a6a6a;
}

.menubar {
    display: flex;
    align-items: center;
    gap: 19px;
    height: 28px;
    padding-left: 9px;
    border-bottom: 1px solid #e2e2e2;
    color: #5e5e5e;
}

.row {
    display: flex;
    align-items: center;
    padding: 0 4px;
}

.row button {
    display: flex;
    align-items: center;
    justify-content: center;
    flex: none;
    width: 46px;
    height: 39px;
}

.row .drop {
    width: 38px;
}

.row .last {
    margin-left: auto;
}

.row .on {
    border: 1px solid #d4d4d4;
    border-radius: 5px;
    background: #e7e6e8;
}

.sep {
    flex: none;
    width: 15px;
    height: 39px;
    background: linear-gradient(#dedede, #dedede) center / 1px 100% no-repeat;
}

.faded {
    opacity: 0.6;
}

.row-file {
    height: 50px;
}

.row-file button {
    width: 40px;
}

.row-file .sep {
    width: 13px;
}

.row-file .font-button {
    justify-content: space-between;
    width: 177px;
    padding: 0 15px;
    border: 1px solid #d2d2d2;
    border-radius: 5px;
    font-size: 16px;
}

.row-tools {
    height: 48px;
}

.row .math {
    font-family: 'Liberation Serif', serif;
    font-size: 12px;
    line-height: 12px;
    text-align: center;
    color: #000;
}

.dot {
    border-radius: 50%;
    background: #000;
}

.dot-fine {
    width: 3px;
    height: 3px;
}

.dot-medium {
    width: 9px;
    height: 10px;
}

.dot-thick {
    width: 15px;
    height: 16px;
}

.dot-color {
    width: 17px;
    height: 18px;
}

.dot-green {
    background: #2b6b14;
    border: 1px solid #1c4c0c;
}

.workspace {
    flex: 1;
    display: flex;
    min-height: 0;
}

.sidebar {
    display: flex;
    flex-direction: column;
    width: 191px;
}

.side-tabs {
    height: 49px;
    border-bottom: 1px solid #dcdcdc;
}

.previews {
    flex: 1;
    padding: 9px;
    background: #fff;
}

.thumb {
    width: 102px;
    height: 152px;
    border: 3px solid #c8402c;
    border-radius: 3px;
    background: #fff;
    box-shadow: 2px 3px 4px rgba(0, 0, 0, 0.5);
}

.side-actions {
    display: flex;
    align-items: center;
    height: 46px;
    padding-left: 3px;
    border-top: 2px solid #e0e0e0;
}

.button-group {
    display: flex;
    width: 150px;
    height: 39px;
    border: 1px solid #d2d2d2;
    border-radius: 5px;
}

.button-group button {
    display: flex;
    align-items: center;
    justify-content: center;
    flex: 1;
}

.button-group button + button {
    border-left: 1px solid #d8d8d8;
}

.side-close {
    margin-left: 10px;
}

.canvas {
    flex: 1;
    display: flex;
    min-width: 0;
    padding: 9px 13px 0 17px;
    overflow: hidden;
    background: #d0d0ce;
}

.paper {
    flex: 1;
    min-width: 0;
    height: 100%;
    border: 3px solid #e2402a;
    border-bottom: none;
    border-radius: 3px 3px 0 0;
    background: #fff;
    box-shadow: 3px 2px 6px rgba(0, 0, 0, 0.7);
}

.statusline {
    display: flex;
    align-items: center;
    height: 63px;
    padding: 0 0 2px 12px;
    border-top: 2px solid #e4e4e4;
}

.statusline b {
    margin-left: 9px;
    color: #505050;
}

.spin {
    display: flex;
    width: 126px;
    height: 52px;
    margin: 0 11px 0 9px;
    border: 1px solid #d0d0d0;
    border-radius: 5px;
}

.spin input {
    width: 50px;
    padding-left: 9px;
    color: #444;
}

.spin i {
    flex: 1;
    border-left: 1px solid #f0f0f0;
}

.foot-sep {
    width: 1px;
    height: 50px;
    margin: 0 15px 0 16px;
    background: #dedede;
}

.layer-button {
    display: flex;
    align-items: center;
    justify-content: center;
    width: 53px;
    height: 52px;
    margin-left: 1px;
    padding-top: 6px;
    border: 1px solid #d0d0d0;
    border-radius: 5px;
}

.zoom {
    margin-left: auto;
}

.zoom button {
    height: 52px;
}

.zoom-slider {
    display: flex;
    flex-direction: column;
    width: 101px;
    height: 50px;
    margin: 0 13px;
}

.zoom-slider label {
    padding-left: 24px;
    text-align: center;
    line-height: 20px;
    color: #b4b4b4;
}

.zoom-slider input {
    appearance: none;
    width: 100%;
    height: 30px;
    background: linear-gradient(90deg, #8a3a8c 62%, #dcdcdc 62%) center / 100% 4px no-repeat;
}

.zoom-slider input::-webkit-slider-thumb {
    appearance: none;
    width: 20px;
    height: 20px;
    border: 1px solid #c8c8c8;
    border-radius: 50% 50% 50% 0;
    background: #fff;
    transform: rotate(-45deg);
}

/* Weylus */
.weylus {
    align-self: start;
    margin-top: 138px;
    background: #c0c0c0;
    font-family: 'DejaVu Sans', sans-serif;
}

.weylus h2 {
    font-family: 'Noto Sans', sans-serif;
}

.settings {
    padding: 36px 33px 36px 14px;
}

.settings-top {
    display: flex;
    align-items: flex-start;
    gap: 10px;
}

.fields {
    display: grid;
    grid-template-columns: 122px 213px;
    gap: 12px 3px;
    align-items: center;
}

.fields > label,
.connect label {
    padding-right: 1px;
    text-align: right;
    white-space: nowrap;
    line-height: 20px;
}

.settings input[type="text"] {
    min-width: 0;
    height: 34px;
    padding: 0 2px 2px;
    border: 1px solid #9a9a9a;
    border-top: 2px solid #868686;
    border-radius: 3px;
    background: #fff;
}

.settings input[type="checkbox"] {
    appearance: none;
    flex: none;
    width: 14px;
    height: 15px;
    border: 1px solid #999;
    border-radius: 3px;
    background: #fff;
}

.settings input[type="checkbox"]:checked {
    background:
        linear-gradient(45deg, transparent 42%, #101070 42%, #101070 60%, transparent 60%) 0 5px / 5px 6px no-repeat,
        linear-gradient(-45deg, transparent 40%, #101070 40%, #101070 60%, transparent 60%) 4px 2px / 8px 9px no-repeat,
        #fff;
}

.options {
    grid-column: 2;
    margin-top: -12px;
}

.options p {
    margin-top: 5px;
    text-align: center;
    line-height: 20px;
    white-space: nowrap;
}

.checks {
    display: flex;
    gap: 14px;
    padding-left: 2px;
    line-height: 20px;
}

.checks label {
    display: flex;
    align-items: center;
    gap: 3px;
    white-space: nowrap;
}

.checks-hw {
    gap: 35px;
    margin-top: 15px;
}

.stop {
    display: block;
    width: 100%;
    height: 34px;
    margin-top: 31px;
    padding-bottom: 2px;
    border: 1px solid #777;
    border-radius: 3px;
    background: linear-gradient(#d2d2d2, #c0c0c0 40%, #bababa);
}

.qr {
    padding: 29px 27px 30px 28px;
    background: #fff;
}

.connect {
    display: grid;
    grid-template-columns: 122px 1fr;
    gap: 3px;
    align-items: center;
    margin-top: 32px;
}

.log {
    height: 206px;
    margin: 9px 0 0 19px;
    padding: 1px 3px;
    border: 1px solid #8a8a8a;
    border-radius: 3px;
    background: #fff;
    line-height: 20px;
    white-space: nowrap;
    overflow: hidden;
}

.partly {
    display: flex;
}

.partly span {
    flex: 1;
}

.selected {
    background: #6669ae;
    color: #14143c;
}

/* Dock */
.dock {
    position: absolute;
    bottom: 2px;
    left: 50%;
    display: flex;
    align-items: center;
    height: 78px;
    padding: 0 4px;
    border-radius: 8px;
    background: rgba(20, 50, 125, 0.62);
    transform: translateX(-50%);
}

.dock a {
    position: relative;
    display: flex;
    align-items: center;
    justify-content: center;
    width: 73px;
    height: 78px;
}

.dock .running::after {
    content: '';
    position: absolute;
    bottom: 4px;
    width: 5px;
    height: 6px;
    border-radius: 2px;
    background: #d9512c;
}

.dock-sep {
    width: 1px;
    height: 48px;
    margin: 0 6px 0 5px;
    background: #3c64ac;
}

.home-indicator {
    position: absolute;
    bottom: 12px;
    left: 50%;
    width: 540px;
    height: 10px;
    border-radius: 5px;
    background: #f0f0f2;
    transform: translateX(-50%);
}

.drag-handle {
    position: absolute;
    top: -30px;
    right: 0;
    display: grid;
    grid-template-columns: 5px 5px;
    align-content: end;
    justify-content: center;
    gap: 5px 4px;
    width: 38px;
    height: 60px;
    padding: 0 10px 17px 0;
    border-radius: 0 0 0 8px;
    background: rgba(140, 150, 175, 0.5);
}

.drag-handle i {
    height: 4px;
    border-radius: 50%;
    background: #14244e;
}
```

FILE: script.js
```js
// Ruled lines of the notebook page
const rules = document.getElementById('rules');
let lines = '';
for (let i = 0; i < 15; i++) {
    const y = 595 + i * 42.4;
    lines += `<path d="M281 ${y}h980"/>`;
}
rules.innerHTML = lines;

// QR code, one string per row
const rows = [
    '1111111.1.11.11..1.11.1111111',
    '1.....1..111..1.1.....1.....1',
    '1.111.1.1..1111...111.1.111.1',
    '1.111.1..1111111.1..1.1.111.1',
    '1.111.1..1...11...111.1.111.1',
    '1.....1.1...1.1.11....1.....1',
    '1111111.1.1.1.1.1.1.1.1111111',
    '............1.11...1.........',
    '1.1...11.111..11111....1..1.1',
    '.1.11..1.11.11111.11.11....11',
    '.1.1.111.11..1.1.1.1..1.111.1',
    '..111....11.1.111111.11......',
    '..111.1.1...111.1111.11.....1',
    '.1.111...1111.1.11.1.11...111',
    '11.1.11..11.1111.1.1.1.1.1..1',
    '1......1.......1..1.1..11....',
    '.11.111111.1.111..11.111.1..1',
    '....1....1..1.111111..1..1111',
    '11.1..11.11..111...11..1....1',
    '..111.....11...1..11..1......',
    '11.1.111.11.1..1...1111111.1.',
    '........1.1.11111..11...111.1',
    '1111111.111...11.1..1.1.1...1',
    '1.....1...1...1.1.1.1...1..1.',
    '1.111.1..1.1.1.11..111111...1',
    '1.111.1...1..1.11...1..11..1.',
    '1.111.1.11111..1..1....11.111',
    '1.....1...111..1..1.1..1.....',
    '1111111.11.1..111..111.1....1'
];
let d = '';
rows.forEach((row, y) => {
    [...row].forEach((cell, x) => {
        if (cell === '1') d += `M${x} ${y}h1v1h-1z`;
    });
});
document.getElementById('qr').innerHTML = `<path d="${d}"/>`;
```
